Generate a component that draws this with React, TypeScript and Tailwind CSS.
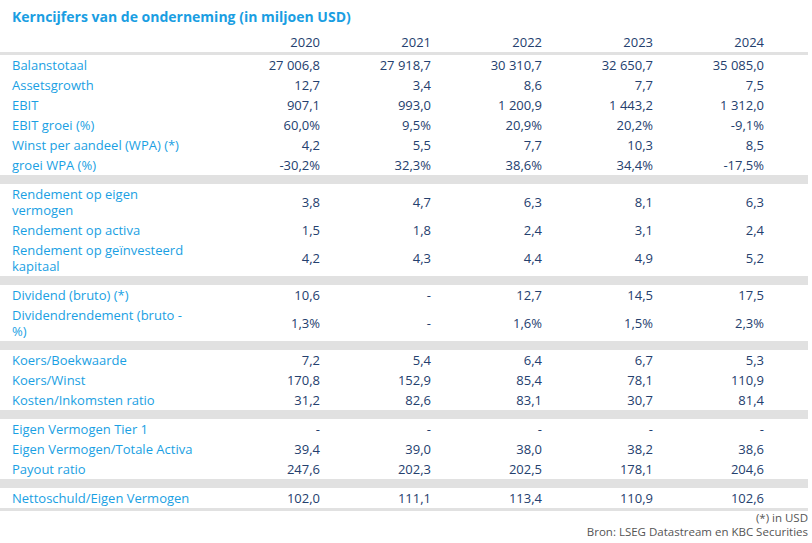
const years = ["2020", "2021", "2022", "2023", "2024"];

type Row = [string, string[]];

const sections: Row[][] = [
  [
    ["Balanstotaal", ["27 006,8", "27 918,7", "30 310,7", "32 650,7", "35 085,0"]],
    ["Assetsgrowth", ["12,7", "3,4", "8,6", "7,7", "7,5"]],
    ["EBIT", ["907,1", "993,0", "1 200,9", "1 443,2", "1 312,0"]],
    ["EBIT groei (%)", ["60,0%", "9,5%", "20,9%", "20,2%", "-9,1%"]],
    ["Winst per aandeel (WPA) (*)", ["4,2", "5,5", "7,7", "10,3", "8,5"]],
    ["groei WPA (%)", ["-30,2%", "32,3%", "38,6%", "34,4%", "-17,5%"]],
  ],
  [
    ["Rendement op eigen\nvermogen", ["3,8", "4,7", "6,3", "8,1", "6,3"]],
    ["Rendement op activa", ["1,5", "1,8", "2,4", "3,1", "2,4"]],
    ["Rendement op geïnvesteerd\nkapitaal", ["4,2", "4,3", "4,4", "4,9", "5,2"]],
  ],
  [
    ["Dividend (bruto) (*)", ["10,6", "-", "12,7", "14,5", "17,5"]],
    ["Dividendrendement (bruto -\n%)", ["1,3%", "-", "1,6%", "1,5%", "2,3%"]],
  ],
  [
    ["Koers/Boekwaarde", ["7,2", "5,4", "6,4", "6,7", "5,3"]],
    ["Koers/Winst", ["170,8", "152,9", "85,4", "78,1", "110,9"]],
    ["Kosten/Inkomsten ratio", ["31,2", "82,6", "83,1", "30,7", "81,4"]],
  ],
  [
    ["Eigen Vermogen Tier 1", ["-", "-", "-", "-", "-"]],
    ["Eigen Vermogen/Totale Activa", ["39,4", "39,0", "38,0", "38,2", "38,6"]],
    ["Payout ratio", ["247,6", "202,3", "202,5", "178,1", "204,6"]],
  ],
  [["Nettoschuld/Eigen Vermogen", ["102,0", "111,1", "113,4", "110,9", "102,6"]]],
];

function DataRow({ label, values }: { label: string; values: string[] }) {
  return (
    <div className="grid grid-cols-[209px_repeat(5,111px)] items-center py-[2px] leading-4">
      <div className="pl-3 text-[#1a9fe3] whitespace-pre-line">{label}</div>
      {values.map((v, i) => (
        <div key={i} className="text-right text-[#24406e] whitespace-nowrap">
          {v}
        </div>
      ))}
    </div>
  );
}

export default function App() {
  return (
    <div className="w-[812px] h-[543px] bg-white font-['Open_Sans',sans-serif] text-[13px]">
      <div className="w-[808px]">
        {/* Title */}
        <h1 className="pl-3 pt-[7px] h-[33px] text-[14px] font-bold text-[#1a9ee2] leading-5">
          Kerncijfers van de onderneming (in miljoen USD)
        </h1>

        {/* Years */}
        <div className="grid grid-cols-[209px_repeat(5,111px)] h-[19px] items-center">
          <div />
          {years.map((y) => (
            <div key={y} className="text-right text-[#24406e]">
              {y}
            </div>
          ))}
        </div>
        <div className="h-[3px] bg-[#e1e1e1]" />

        {sections.map((rows, si) => (
          <div key={si}>
            {si > 0 && <div className="h-[9px] bg-[#e1e1e1]" />}
            {rows.map(([label, values]) => (
              <DataRow key={label} label={label} values={values} />
            ))}
          </div>
        ))}
        <div className="h-[3px] bg-[#e1e1e1]" />

        {/* Footer */}
        <div className="text-right text-[11.5px] leading-[14px] text-[#555]">
          <div>(*) in USD</div>
          <div>Bron: LSEG Datastream en KBC Securities</div>
        </div>
      </div>
    </div>
  );
}
